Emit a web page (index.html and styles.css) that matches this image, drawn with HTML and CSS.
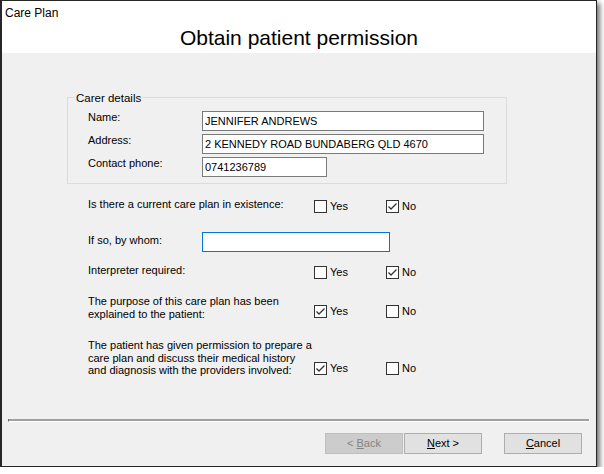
FILE: index.html
```html
<!DOCTYPE html>
<html>
<head>
<meta charset="utf-8">
<link rel="stylesheet" href="styles.css">
</head>
<body>
<div class="window">
  <div class="header">
    <div class="title">Care Plan</div>
    <h1 class="heading">Obtain patient permission</h1>
  </div>
  <div class="content">
    <div class="group">
      <div class="legend">Carer details</div>
      <div class="frow first">
        <div class="flabel">Name:</div>
        <div class="field wide">JENNIFER ANDREWS</div>
      </div>
      <div class="frow">
        <div class="flabel">Address:</div>
        <div class="field wide">2 KENNEDY ROAD BUNDABERG QLD 4670</div>
      </div>
      <div class="frow">
        <div class="flabel">Contact phone:</div>
        <div class="field short">0741236789</div>
      </div>
    </div>
    <div class="questions">
      <div class="q q1">
        <div class="qlabel">Is there a current care plan in existence:</div>
        <div class="opt"><span class="box"></span>Yes</div>
        <div class="opt"><span class="box"><svg width="11" height="11" viewBox="0 0 11 11"><polyline points="1.5,5.5 4,8 9.5,2.5" fill="none" stroke="#333" stroke-width="1.3"/></svg></span>No</div>
      </div>
      <div class="irow">
        <div class="ilabel">If so, by whom:</div>
        <div class="field whom focus"></div>
      </div>
      <div class="q q3">
        <div class="qlabel">Interpreter required:</div>
        <div class="opt"><span class="box"></span>Yes</div>
        <div class="opt"><span class="box"><svg width="11" height="11" viewBox="0 0 11 11"><polyline points="1.5,5.5 4,8 9.5,2.5" fill="none" stroke="#333" stroke-width="1.3"/></svg></span>No</div>
      </div>
      <div class="q q4">
        <div class="qlabel">The purpose of this care plan has been<br>explained to the patient:</div>
        <div class="opt"><span class="box"><svg width="11" height="11" viewBox="0 0 11 11"><polyline points="1.5,5.5 4,8 9.5,2.5" fill="none" stroke="#333" stroke-width="1.3"/></svg></span>Yes</div>
        <div class="opt"><span class="box"></span>No</div>
      </div>
      <div class="q q5">
        <div class="qlabel">The patient has given permission to prepare a<br>care plan and discuss their medical history<br>and diagnosis with the providers involved:</div>
        <div class="opt"><span class="box"><svg width="11" height="11" viewBox="0 0 11 11"><polyline points="1.5,5.5 4,8 9.5,2.5" fill="none" stroke="#333" stroke-width="1.3"/></svg></span>Yes</div>
        <div class="opt"><span class="box"></span>No</div>
      </div>
    </div>
  </div>
  <div class="footer">
    <div class="separator"></div>
    <div class="buttons">
      <div class="btn disabled">&lt; <u>B</u>ack</div>
      <div class="btn next"><u>N</u>ext &gt;</div>
      <div class="btn cancel"><u>C</u>ancel</div>
    </div>
  </div>
</div>
</body>
</html>
```

FILE: styles.css
```css
html, body {
  margin: 0;
  padding: 0;
  background: #ffffff;
}
body {
  font-family: "Liberation Sans", Arial, sans-serif;
  font-size: 11px;
  color: #000;
}
.window {
  width: 597px;
  height: 467px;
  box-sizing: border-box;
  border: 1px solid #262626;
  border-left-width: 2px;
  background: #f0f0f0;
  display: flex;
  flex-direction: column;
  box-shadow: 3px 3px 5px rgba(0, 0, 0, 0.55);
}
.header {
  background: #ffffff;
  height: 52px;
  box-sizing: border-box;
  padding-top: 5px;
}
.title {
  font-size: 12px;
  line-height: 14px;
  padding-left: 3px;
}
.heading {
  margin: 6px 0 0 0;
  font-weight: normal;
  font-size: 21px;
  line-height: 24px;
  text-align: center;
}
.content {
  flex: 1;
  padding-left: 65px;
}
.group {
  margin-top: 44px;
  width: 440px;
  box-sizing: border-box;
  border: 1px solid #dcdcdc;
  padding: 0 0 6px 20px;
}
.legend {
  display: table;
  margin: -6px 0 0 -13px;
  padding: 0 1px;
  background: #f0f0f0;
  line-height: 13px;
  font-size: 11.5px;
}
.frow {
  display: flex;
  align-items: flex-start;
  margin-top: 3px;
}
.frow.first {
  margin-top: 6px;
}
.flabel {
  width: 114px;
  line-height: 13px;
}
.field {
  height: 20px;
  box-sizing: border-box;
  border: 1px solid #7a7a7a;
  background: #fff;
  padding: 0 2px;
  line-height: 18px;
  white-space: nowrap;
}
.field.wide { width: 282px; }
.field.short { width: 125px; }
.field.whom { width: 188px; }
.field.focus { border-color: #0078d7; }
.questions {
  padding-left: 21px;
  display: flex;
  flex-direction: column;
}
.q {
  display: grid;
  grid-template-columns: 226px 72px auto;
  align-items: start;
}
.qlabel {
  line-height: 12.5px;
}
.q1 { margin-top: 14px; }
.q3 { margin-top: 12px; }
.q4 { margin-top: 16px; }
.q5 { margin-top: 19px; }
.opt {
  display: flex;
  align-items: center;
  gap: 3px;
  line-height: 13px;
  margin-top: 2px;
}
.q4 .opt { margin-top: 10px; }
.q5 .opt { margin-top: 23px; }
.box {
  width: 13px;
  height: 13px;
  box-sizing: border-box;
  border: 1px solid #333;
  background: #fff;
  display: flex;
  align-items: center;
  justify-content: center;
}
.irow {
  display: flex;
  align-items: flex-start;
  margin-top: 19px;
}
.ilabel {
  width: 114px;
  line-height: 13px;
  padding-top: 2px;
}
.footer {
  padding: 0 14px 12px 6px;
}
.separator {
  height: 2px;
  background: #a0a0a0;
  border-bottom: 1px solid #ffffff;
  border-left: 1px solid #696969;
  margin-right: -7px;
}
.buttons {
  display: flex;
  justify-content: flex-end;
  margin-top: 11px;
}
.btn {
  width: 78px;
  height: 21px;
  box-sizing: border-box;
  border: 1px solid #adadad;
  background: #e1e1e1;
  text-align: center;
  line-height: 19px;
}
.btn.disabled {
  background: #cccccc;
  border-color: #bfbfbf;
  color: #838383;
}
.btn.next {
  margin-left: 1px;
}
.btn.cancel {
  margin-left: 22px;
}
u {
  text-decoration: underline;
  text-underline-offset: 1px;
}
```
